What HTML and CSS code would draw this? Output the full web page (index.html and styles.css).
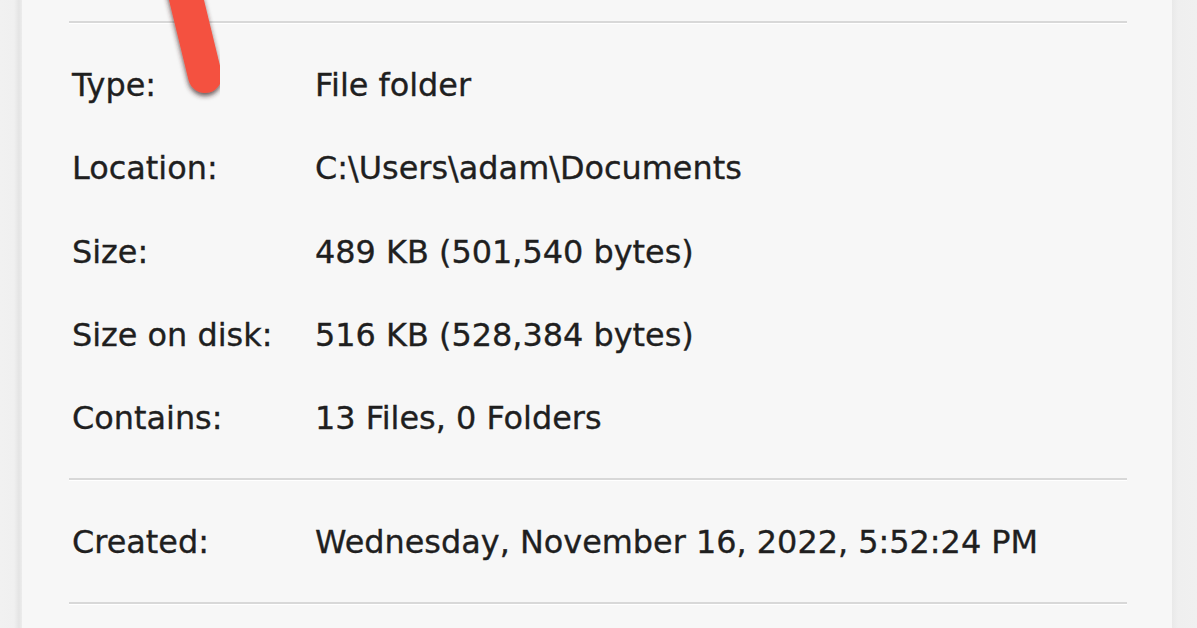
FILE: index.html
```html
<!DOCTYPE html>
<html lang="en">
<head>
<meta charset="utf-8">
<title>Folder Properties</title>
<link rel="stylesheet" href="styles.css">
</head>
<body>
<div class="window">
  <div class="edge-left"></div>
  <div class="panel">
    <div class="top-cut"></div>
    <div class="sep"></div>
    <div class="section">
      <div class="row"><span class="label">Type:</span><span class="value">File folder</span></div>
      <div class="row"><span class="label">Location:</span><span class="value">C:\Users\adam\Documents</span></div>
      <div class="row"><span class="label">Size:</span><span class="value">489 KB (501,540 bytes)</span></div>
      <div class="row"><span class="label">Size on disk:</span><span class="value">516 KB (528,384 bytes)</span></div>
      <div class="row"><span class="label">Contains:</span><span class="value">13 Files, 0 Folders</span></div>
    </div>
    <div class="sep"></div>
    <div class="section">
      <div class="row"><span class="label">Created:</span><span class="value">Wednesday, November 16, 2022, 5:52:24 PM</span></div>
    </div>
    <div class="sep"></div>
  </div>
  <div class="edge-right"></div>
  <svg class="arrow" width="80" height="120" viewBox="0 0 80 120" aria-hidden="true">
    <defs>
      <filter id="sh" x="-50%" y="-50%" width="200%" height="200%">
        <feDropShadow dx="0" dy="3" stdDeviation="2.5" flood-color="#3a2020" flood-opacity="0.75"/>
      </filter>
    </defs>
    <line x1="16.7" y1="-40" x2="45" y2="76" stroke="#f4513f" stroke-width="34" stroke-linecap="round" filter="url(#sh)"/>
  </svg>
</div>
</body>
</html>
```

FILE: styles.css
```css
html, body {
  margin: 0;
  padding: 0;
  background: #f7f7f7;
}

.window {
  position: relative;
  display: flex;
  width: 1197px;
  height: 628px;
  overflow: hidden;
  background: #f7f7f7;
  font-family: "DejaVu Sans", Verdana, sans-serif;
  font-size: 31.9px;
  color: #1f1f1f;
  -webkit-text-stroke: 0.35px #1f1f1f;
}

.edge-left {
  width: 22px;
  flex: none;
  background: linear-gradient(to right, #f1f1f1 0, #f0f0f0 14px, #e4e4e4 19px, #ececec 22px);
}

.edge-right {
  width: 25px;
  flex: none;
  background: linear-gradient(to right, #e9e9e9 0, #efefef 6px, #f0f0f0 100%);
}

.panel {
  flex: 1;
  display: flex;
  flex-direction: column;
  padding: 0 45px 0 47px;
}

.top-cut {
  height: 20.5px;
  flex: none;
}

.sep {
  height: 2px;
  flex: none;
  background: #d8d8d8;
  box-shadow: 0 1px 0 #ffffff;
}

.section {
  padding: 21.5px 0 17.5px;
}

.row {
  display: flex;
  height: 83.3px;
  line-height: 83.3px;
  padding-left: 3px;
  white-space: nowrap;
}

.label {
  width: 243px;
  flex: none;
}

.value {
  flex: 1;
}

.arrow {
  position: absolute;
  left: 160px;
  top: 0;
}
```
